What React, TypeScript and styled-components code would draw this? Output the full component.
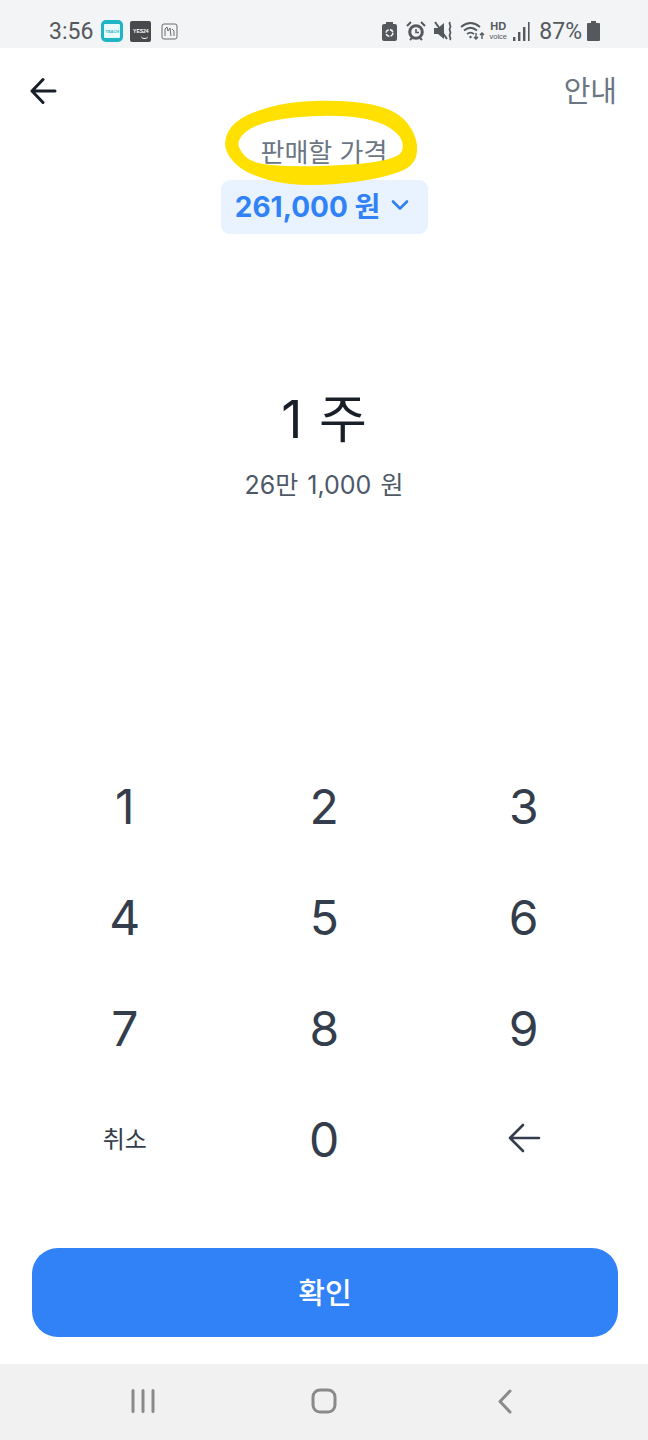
import styled, { createGlobalStyle } from 'styled-components';

const GlobalStyle = createGlobalStyle`
  html, body {
    margin: 0;
    padding: 0;
    background: #fff;
  }
  body {
    font-family: Inter, "Noto Sans CJK KR", "Noto Sans", sans-serif;
  }
`;

const Screen = styled.div`
  width: 648px;
  height: 1440px;
  display: flex;
  flex-direction: column;
  overflow: hidden;
  background: #fff;
`;

const StatusBar = styled.div`
  height: 48px;
  flex: none;
  background: #f2f4f6;
  display: flex;
  align-items: flex-end;
  justify-content: space-between;
  padding: 0 48px 2px 49px;
  box-sizing: border-box;
  color: #55585c;
`;

const StatusGroup = styled.div`
  display: flex;
  align-items: center;
  height: 30px;
`;

const StatusSvg = styled.svg<{ $left?: number }>`
  flex: none;
  margin-left: ${({ $left }) => $left ?? 0}px;
`;

const Clock = styled.span`
  font-family: Roboto, sans-serif;
  font-size: 23px;
  margin-right: 8px;
`;

const Battery = styled.span`
  font-family: Roboto, sans-serif;
  font-size: 23px;
  margin-left: 9px;
`;

const TeachIcon = styled.div`
  width: 22px;
  height: 22px;
  border-radius: 5px;
  background: #1fb5c6;
  display: flex;
  align-items: center;
  justify-content: center;
`;

const TeachPage = styled.div`
  width: 16px;
  height: 14px;
  background: #e9fbfd;
  border-radius: 1px;
  color: #1fb5c6;
  font: 700 4px "Liberation Sans", sans-serif;
  display: flex;
  align-items: center;
  justify-content: center;
`;

const YesIcon = styled.div`
  position: relative;
  width: 21px;
  height: 21px;
  margin-left: 7px;
  background: #47494b;
  border-radius: 2px;
  color: #fff;
  font: 700 5px/6px "Liberation Sans", sans-serif;
  display: flex;
  align-items: center;
  justify-content: center;
  &::after {
    content: '';
    position: absolute;
    right: 3px;
    bottom: 3px;
    width: 7px;
    height: 3px;
    border-bottom: 1px solid #fff;
    border-radius: 0 0 5px 5px;
  }
`;

const VoLte = styled.div`
  margin-left: 3px;
  width: 20px;
  display: flex;
  flex-direction: column;
  align-items: center;
  gap: 1px;
  font-family: "Liberation Sans", sans-serif;
  color: #55585c;
`;

const VoLteHd = styled.span`
  font-size: 11px;
  line-height: 11px;
  font-weight: 700;
`;

const VoLteVoice = styled.span`
  font-size: 7.5px;
  line-height: 8px;
`;

const Body = styled.div`
  position: relative;
  flex: 1;
  display: flex;
  flex-direction: column;
  padding: 0 30px;
`;

const TopBar = styled.div`
  height: 85px;
  display: flex;
  align-items: center;
  justify-content: space-between;
  padding-right: 1px;
  flex: none;
`;

const GuideLink = styled.span`
  font-size: 29px;
  color: #6b7684;
  padding-bottom: 3px;
`;

const PriceBlock = styled.div`
  display: flex;
  flex-direction: column;
  align-items: center;
`;

const PriceLabel = styled.div`
  font-size: 26px;
  line-height: 36px;
  padding-top: 2px;
  color: #6b7684;
`;

const PricePill = styled.div`
  margin-top: 9px;
  width: 207px;
  height: 54px;
  box-sizing: border-box;
  padding: 0 4px 4px 0;
  border-radius: 9px;
  background: #e8f3ff;
  color: #3182f6;
  font-size: 28px;
  font-weight: 700;
  display: flex;
  align-items: center;
  justify-content: center;
  gap: 11px;
`;

// marker circle drawn over the label
const Scribble = styled.svg`
  position: absolute;
  left: 210px;
  top: 47px;
  pointer-events: none;
`;

const Quantity = styled.div`
  margin-top: 150px;
  display: flex;
  flex-direction: column;
  align-items: center;
`;

const QuantityValue = styled.div`
  font-size: 52px;
  line-height: 72px;
  word-spacing: 2px;
  color: #191f28;
`;

const QuantityWon = styled.div`
  margin-top: 10px;
  font-size: 25px;
  line-height: 38px;
  word-spacing: 2px;
  color: #4e5968;
`;

const Keypad = styled.div`
  margin: 247px -5px 0;
  display: grid;
  grid-template-columns: repeat(3, 199.5px);
  grid-auto-rows: 111px;
`;

const Key = styled.button<{ $small?: boolean }>`
  border: 0;
  background: none;
  padding: 0 0 ${({ $small }) => ($small ? 4 : 0)}px;
  color: #333d4b;
  font-family: inherit;
  font-size: ${({ $small }) => ($small ? 24 : 48)}px;
  display: flex;
  align-items: center;
  justify-content: center;
`;

const Confirm = styled.button`
  margin: 53px 0 0 2px;
  width: 586px;
  height: 89px;
  flex: none;
  border: 0;
  padding: 0 0 4px;
  border-radius: 26px;
  background: #3182f6;
  color: #fff;
  font-family: inherit;
  font-size: 29px;
  font-weight: 500;
`;

const NavBar = styled.div`
  height: 76px;
  flex: none;
  background: #f1f1f1;
  display: grid;
  grid-template-columns: repeat(3, 181px);
  justify-content: center;
  align-items: center;
  justify-items: center;
  padding-bottom: 2px;
  box-sizing: border-box;
  color: #8a8a8a;
`;

const keys = ['1', '2', '3', '4', '5', '6', '7', '8', '9'];

const OUTER = [[40, 140], [68, 82], [150, 42], [260, 18], [400, 16], [515, 32], [585, 68], [626, 140], [614, 214], [520, 248], [380, 270], [230, 270], [116, 238], [58, 192]];
const INNER = [[80, 140], [115, 100], [190, 75], [300, 62], [420, 62], [510, 80], [565, 115], [582, 150], [570, 185], [480, 205], [370, 212], [240, 215], [130, 205], [95, 175]];

// closed curve through the midpoints of a point list
function smooth(points: number[][]) {
  const mid = (a: number[], b: number[]) => `${(a[0] + b[0]) / 2} ${(a[1] + b[1]) / 2}`;
  let d = `M${mid(points[points.length - 1], points[0])}`;
  points.forEach((p, i) => {
    d += `Q${p[0]} ${p[1]} ${mid(p, points[(i + 1) % points.length])}`;
  });
  return d + 'Z';
}

export default function App() {
  return (
    <>
      <GlobalStyle />
      <Screen>
        <StatusBar>
          <StatusGroup>
            <Clock>3:56</Clock>
            <TeachIcon>
              <TeachPage>TEACH</TeachPage>
            </TeachIcon>
            <YesIcon>YES24</YesIcon>
            <StatusSvg $left={10} width="17" height="17" viewBox="0 0 17 17" fill="none" stroke="#6a6a6a">
              <rect x="1" y="1" width="15" height="15" rx="2" />
              <path d="M4 13V6l2-2 1 4 2-3 1 8M11 6l2 2v5" />
            </StatusSvg>
          </StatusGroup>
          <StatusGroup>
            <StatusSvg width="15" height="19" viewBox="0 0 15 19" fill="#55585c">
              <path d="M4 0h7v2h2a2 2 0 0 1 2 2v13a2 2 0 0 1-2 2H2a2 2 0 0 1-2-2V4a2 2 0 0 1 2-2h2z" />
              <circle cx="7.500" cy="11" r="3.400" fill="none" stroke="#f2f4f6" strokeWidth="1.600" strokeDasharray="4 1.400" />
            </StatusSvg>
            <StatusSvg $left={9} width="20" height="20" viewBox="0 0 20 20" fill="none" stroke="#55585c">
              <circle cx="10" cy="11" r="6.300" strokeWidth="3" />
              <path d="M10 8v3.500h3" strokeWidth="1.600" />
              <path d="M1 5l4-4M19 5l-4-4M4 19l2-2M16 19l-2-2" strokeWidth="2" />
            </StatusSvg>
            <StatusSvg $left={8} width="20" height="20" viewBox="0 0 20 20" fill="#55585c">
              <path d="M0 7h4l6-5v16l-6-5H0z" />
              <path d="M1 1l12 17" stroke="#55585c" strokeWidth="2" />
              <path d="M16 1c-2 3 2 3 0 6s2 3 0 6 2 3 0 6" fill="none" stroke="#55585c" strokeWidth="1.800" />
            </StatusSvg>
            <StatusSvg $left={6} width="25" height="20" viewBox="0 0 25 20" fill="none" stroke="#55585c" strokeWidth="1.800">
              <path d="M1 6c6-5 13-5 19 0M4 9.500c4-3.400 9-3.400 13 0M7 13c2-1.600 5-1.600 7 0" />
              <circle cx="10.500" cy="16" r="1.200" fill="#55585c" stroke="none" />
              <path d="M16 12v6M14 16l2 2 2-2M22 18v-6M20 14l2-2 2 2" strokeWidth="1.400" />
            </StatusSvg>
            <VoLte>
              <VoLteHd>HD</VoLteHd>
              <VoLteVoice>voice</VoLteVoice>
            </VoLte>
            <StatusSvg $left={5} width="17" height="19" viewBox="0 0 17 19" fill="#55585c">
              <rect x="0" y="15" width="2.400" height="4" />
              <rect x="5" y="10" width="2.400" height="9" />
              <rect x="10" y="5" width="2.400" height="14" />
              <rect x="15" y="0" width="1.600" height="19" />
            </StatusSvg>
            <Battery>87%</Battery>
            <StatusSvg $left={5} width="13" height="20" viewBox="0 0 13 20" fill="#55585c">
              <path d="M4 0h5v2h3a1 1 0 0 1 1 1v16a1 1 0 0 1-1 1H1a1 1 0 0 1-1-1V3a1 1 0 0 1 1-1h3z" />
            </StatusSvg>
          </StatusGroup>
        </StatusBar>

        <Body>
          <TopBar>
            <svg width="28" height="28" viewBox="0 0 28 28" fill="none" stroke="#191f28" strokeWidth="3" strokeLinecap="round" strokeLinejoin="round">
              <path d="M25 14H2M13 2.500 2 14l11 11.500" />
            </svg>
            <GuideLink>안내</GuideLink>
          </TopBar>

          <PriceBlock>
            <PriceLabel>판매할 가격</PriceLabel>
            <PricePill>
              261,000 원
              <svg width="18" height="12" viewBox="0 0 18 12" fill="none" stroke="#3182f6" strokeWidth="2.600" strokeLinecap="round" strokeLinejoin="round">
                <path d="M2 2.500l7 7 7-7" />
              </svg>
            </PricePill>
          </PriceBlock>

          <Scribble width="220" height="95" viewBox="0 0 660 285">
            <path d={smooth(OUTER) + smooth(INNER)} fill="#ffe000" fillRule="evenodd" />
          </Scribble>

          <Quantity>
            <QuantityValue>1 주</QuantityValue>
            <QuantityWon>26만 1,000 원</QuantityWon>
          </Quantity>

          <Keypad>
            {keys.map((k) => (
              <Key key={k}>{k}</Key>
            ))}
            <Key $small>취소</Key>
            <Key>0</Key>
            <Key $small>
              <svg width="34" height="30" viewBox="0 0 34 30" fill="none" stroke="#333d4b" strokeWidth="2.600" strokeLinecap="round" strokeLinejoin="round">
                <path d="M32 15H3M16 2 3 15l13 13" />
              </svg>
            </Key>
          </Keypad>

          <Confirm>확인</Confirm>
        </Body>

        <NavBar>
          <svg width="26" height="24" viewBox="0 0 26 24" fill="none" stroke="currentColor" strokeWidth="3" strokeLinecap="round">
            <path d="M3 1.500v21M13 1.500v21M23 1.500v21" />
          </svg>
          <svg width="26" height="26" viewBox="0 0 26 26" fill="none" stroke="currentColor" strokeWidth="3">
            <rect x="2" y="2" width="22" height="22" rx="7" />
          </svg>
          <svg width="16" height="25" viewBox="0 0 16 25" fill="none" stroke="currentColor" strokeWidth="3" strokeLinecap="round" strokeLinejoin="round">
            <path d="M13 2 3 12.500 13 23" />
          </svg>
        </NavBar>
      </Screen>
    </>
  );
}
